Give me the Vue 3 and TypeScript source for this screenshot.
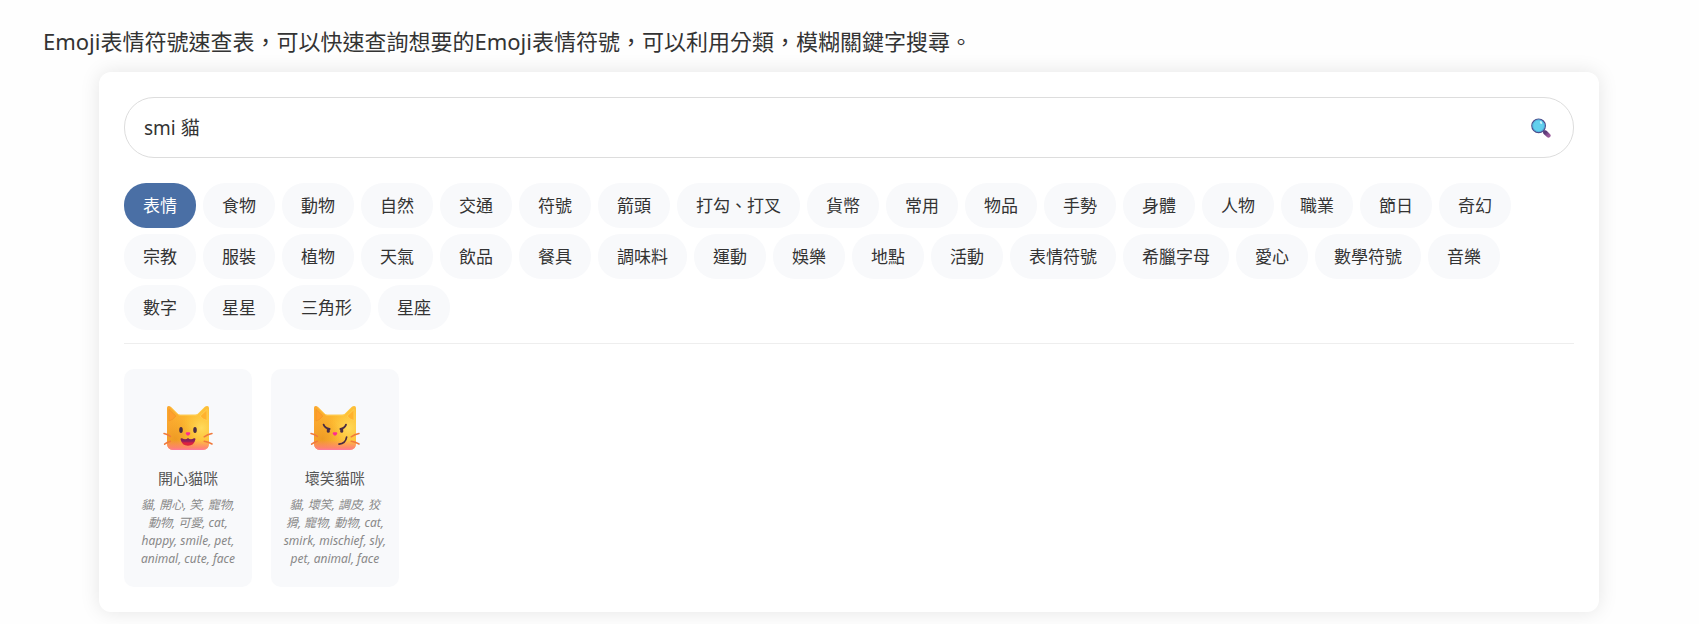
<script setup lang="ts">
import { ref } from 'vue'

interface EmojiItem {
  id: string
  name: string
  keywords: string
  mood: 'happy' | 'smirk'
}

const query = ref('smi 貓')
const active = ref('表情')

const categories: string[] = [
  '表情', '食物', '動物', '自然', '交通', '符號', '箭頭', '打勾、打叉', '貨幣', '常用', '物品',
  '手勢', '身體', '人物', '職業', '節日', '奇幻', '宗教', '服裝', '植物', '天氣', '飲品', '餐具',
  '調味料', '運動', '娛樂', '地點', '活動', '表情符號', '希臘字母', '愛心', '數學符號', '音樂',
  '數字', '星星', '三角形', '星座',
]

const items: EmojiItem[] = [
  {
    id: 'happy-cat',
    name: '開心貓咪',
    keywords: '貓, 開心, 笑, 寵物, 動物, 可愛, cat, happy, smile, pet, animal, cute, face',
    mood: 'happy',
  },
  {
    id: 'smirk-cat',
    name: '壞笑貓咪',
    keywords: '貓, 壞笑, 調皮, 狡猾, 寵物, 動物, cat, smirk, mischief, sly, pet, animal, face',
    mood: 'smirk',
  },
]
</script>

<template>
  <main class="page">
    <p class="intro">Emoji表情符號速查表，可以快速查詢想要的Emoji表情符號，可以利用分類，模糊關鍵字搜尋。</p>

    <section class="panel">
      <form class="search" role="search" @submit.prevent>
        <input v-model="query" class="search-input" type="text" aria-label="搜尋" />
        <button class="search-button" type="submit" aria-label="搜尋">
          <svg viewBox="0 0 20 20" width="20" height="20" aria-hidden="true">
            <defs>
              <linearGradient id="handle" x1="0" y1="0" x2="1" y2="1">
                <stop offset="0" stop-color="#5b3a78" />
                <stop offset="1" stop-color="#99589a" />
              </linearGradient>
            </defs>
            <path d="M12.4 13l1.3 1.2" stroke="#5a4280" stroke-width="2.4" />
            <path d="M14.4 14.7l3 2.8" stroke="url(#handle)" stroke-width="4.4" stroke-linecap="round" />
            <circle cx="7.6" cy="7.8" r="6.8" fill="#62d0ee" stroke="#4b4c8c" stroke-width="1.2" />
            <circle cx="7.6" cy="7.8" r="5.8" fill="none" stroke="#4aa9d8" stroke-width="0.7" />
            <ellipse cx="10" cy="4.6" rx="1.1" ry="1.5" transform="rotate(-25 10 4.6)" fill="#c4f3fb" />
          </svg>
        </button>
      </form>

      <nav class="categories" aria-label="分類">
        <button
          v-for="category in categories"
          :key="category"
          type="button"
          class="chip"
          :class="{ active: category === active }"
          @click="active = category"
        >{{ category }}</button>
      </nav>

      <div class="grid">
        <article v-for="item in items" :key="item.id" class="card">
          <svg class="emoji" viewBox="0 0 50 46" width="50" height="46" role="img" :aria-label="item.name">
            <defs>
              <linearGradient :id="`${item.id}-base`" x1="0" y1="0" x2="1" y2="0">
                <stop offset="0" stop-color="#fba72f" />
                <stop offset="0.5" stop-color="#fcb72f" />
                <stop offset="1" stop-color="#fdc03a" />
              </linearGradient>
              <radialGradient :id="`${item.id}-glow`" cx="0.82" cy="0.5" r="0.5">
                <stop offset="0" stop-color="#ffdb5c" />
                <stop offset="1" stop-color="#ffc838" stop-opacity="0" />
              </radialGradient>
              <radialGradient :id="`${item.id}-shade`" cx="0.2" cy="0.75" r="0.5">
                <stop offset="0" stop-color="#e8921f" stop-opacity="0.7" />
                <stop offset="1" stop-color="#f0a028" stop-opacity="0" />
              </radialGradient>
              <linearGradient :id="`${item.id}-chin`" x1="0" y1="0" x2="0" y2="1">
                <stop offset="0.78" stop-color="#ff7a7a" stop-opacity="0" />
                <stop offset="0.95" stop-color="#ff7e78" stop-opacity="0.85" />
                <stop offset="1" stop-color="#ff78a0" />
              </linearGradient>
              <linearGradient :id="`${item.id}-mouth`" x1="0" y1="0" x2="0" y2="1">
                <stop offset="0" stop-color="#6b1f5c" />
                <stop offset="0.45" stop-color="#9c2058" />
                <stop offset="0.65" stop-color="#e0203f" />
                <stop offset="1" stop-color="#d52440" />
              </linearGradient>
              <path
                :id="`${item.id}-head`"
                d="M4 3Q4 1 5.6 1Q7 1 8 2L15 9Q16 9.8 17.4 9.8H32.2Q33.6 9.8 34.6 9L41.6 2Q42.8 1 44.2 1Q46 1 46 3V38.5Q46 45 39.5 45H10.5Q4 45 4 38.5Z"
              />
            </defs>
            <use :href="`#${item.id}-head`" :fill="`url(#${item.id}-base)`" />
            <use :href="`#${item.id}-head`" :fill="`url(#${item.id}-glow)`" />
            <use :href="`#${item.id}-head`" :fill="`url(#${item.id}-shade)`" />
            <use :href="`#${item.id}-head`" :fill="`url(#${item.id}-chin)`" />
            <path d="M6 4.5L12.8 11Q10 15 6 16Z" fill="#ff9f2d" stroke="#ef9427" stroke-width="0.7" stroke-linejoin="round" />
            <path d="M44 4.5L37.2 11Q40 15 44 15.5Z" fill="#ffb22e" stroke="#ffd055" stroke-width="0.8" stroke-linejoin="round" />
            <path d="M8 2.4L15 9.4Q16 10.2 17.4 10.2H32.2Q33.6 10.2 34.6 9.4L41.6 2.4" fill="none" stroke="#ffd45a" stroke-width="0.8" />
            <g fill="none" stroke="#f07a3c" stroke-width="1.5" stroke-linecap="round">
              <path d="M1 28.6Q4 29.2 7.4 31.4" />
              <path d="M1.6 39.2Q4 37.2 7.4 36.2" />
              <path d="M49 28.6Q44.5 29.4 41.2 31.8" />
              <path d="M49 39Q45.5 36.8 41.2 36.2" />
            </g>
            <path d="M22.8 28.4Q22.6 27.2 24 27.2H26Q27.4 27.2 27.2 28.4Q26.6 30.2 25 30.8Q23.4 30.2 22.8 28.4Z" fill="#ff2a90" />
            <g v-if="item.mood === 'happy'">
              <ellipse cx="18" cy="25" rx="1.8" ry="3" fill="#4a2c43" />
              <ellipse cx="32" cy="25" rx="1.8" ry="3" fill="#4a2c43" />
              <path
                d="M17.6 34.6Q17.2 33 19 33.2Q22.6 35.2 25 32.9Q27.4 35.2 31 33.2Q32.8 33 32.4 34.6Q31 40.8 25 40.8Q19 40.8 17.6 34.6Z"
                :fill="`url(#${item.id}-mouth)`"
              />
            </g>
            <g v-else fill="none" stroke="#4a2c43" stroke-linecap="round">
              <path d="M13.6 19.6Q15 23.2 19.6 24" stroke-width="1.8" />
              <path d="M36 19.6Q34.8 23.2 30.4 24" stroke-width="1.8" />
              <path d="M18.3 24.4V26.2" stroke-width="3" />
              <path d="M31.7 24.4V26.2" stroke-width="3" />
              <path d="M36.6 32.2Q35.6 38.6 29 39.2" stroke-width="1.7" />
            </g>
          </svg>
          <h2 class="name">{{ item.name }}</h2>
          <p class="keywords">{{ item.keywords }}</p>
        </article>
      </div>
    </section>
  </main>
</template>

<style>
body {
  margin: 0;
  background: #fefefe;
}
</style>

<style scoped>
.page {
  box-sizing: border-box;
  min-height: 100vh;
  padding: 24px 44px 12px 43px;
  color: #333;
  font-family: 'Noto Sans', 'Noto Sans CJK TC', sans-serif;
}

.intro {
  margin: 0 0 14px;
  font-size: 22px;
  line-height: 34px;
}

.panel {
  box-sizing: border-box;
  max-width: 1500px;
  margin: 0 auto;
  padding: 25px;
  border-radius: 12px;
  background: #fff;
  box-shadow: 0 0 20px rgba(0, 0, 0, 0.1);
}

.search {
  display: flex;
  align-items: center;
  margin-bottom: 25px;
  padding: 0 22px 0 19px;
  border: 1px solid #ddd;
  border-radius: 30px;
}

.search-input {
  flex: 1;
  min-width: 0;
  padding: 16px 0 14px;
  border: 0;
  outline: 0;
  background: transparent;
  color: inherit;
  font: inherit;
  font-size: 19px;
  line-height: 29px;
}

.search-button {
  display: flex;
  padding: 0;
  border: 0;
  background: none;
  cursor: pointer;
}

.categories {
  display: flex;
  flex-wrap: wrap;
  gap: 6px 7px;
  margin-bottom: 25px;
  padding-bottom: 13px;
  border-bottom: 1px solid #eee;
}

.chip {
  padding: 10px 19px;
  border: 0;
  border-radius: 22px;
  background: #f8f9fb;
  color: inherit;
  font: inherit;
  font-size: 17px;
  line-height: 25px;
  cursor: pointer;
}

.chip.active {
  background: #4a6fa5;
  color: #fff;
}

.grid {
  display: grid;
  grid-template-columns: repeat(auto-fill, minmax(120px, 1fr));
  gap: 19px;
}

.card {
  display: flex;
  flex-direction: column;
  align-items: center;
  padding: 36px 12px 19px;
  border-radius: 10px;
  background: #f8f9fb;
  text-align: center;
}

.emoji {
  margin-bottom: 16px;
}

.name {
  margin: 0 0 7px;
  color: #555;
  font-size: 15px;
  font-weight: 400;
  line-height: 22px;
}

.keywords {
  margin: 0;
  color: #888;
  font-size: 12px;
  font-style: italic;
  line-height: 18px;
}
</style>
